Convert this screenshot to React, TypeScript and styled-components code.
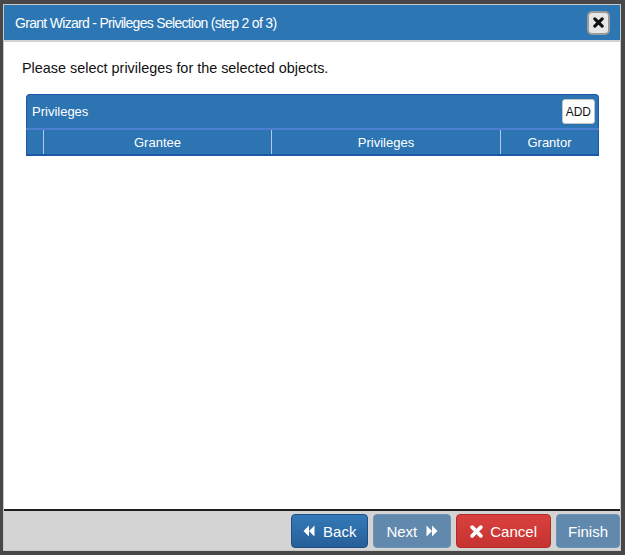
import React from 'react';
import styled, { createGlobalStyle } from 'styled-components';

const GlobalStyle = createGlobalStyle`
    html, body {
        margin: 0;
        padding: 0;
        background: #474747;
        font-family: "Liberation Sans", Arial, sans-serif;
    }
`;

type Tone = 'primary' | 'disabled' | 'danger';

const columns = [
    { label: '', width: 17 },
    { label: 'Grantee', width: 228 },
    { label: 'Privileges', width: 229 },
    { label: 'Grantor', width: 99 },
];

const BackIcon = () => (
    <svg width="12" height="12" viewBox="0 0 12 12">
        <path d="M0.5 6l5.5-5.5v11z M6 6l5.5-5.5v11z" fill="#fff" />
    </svg>
);

const ForwardIcon = () => (
    <svg width="12" height="12" viewBox="0 0 12 12">
        <path d="M0.5 0.5l5.5 5.5-5.5 5.5z M6 0.5l5.5 5.5-5.5 5.5z" fill="#fff" />
    </svg>
);

const CrossIcon = ({ size, color }: { size: number; color: string }) => (
    <svg width={size} height={size} viewBox="0 0 12 12">
        <path
            d="M2 2l8 8 M10 2l-8 8"
            stroke={color}
            strokeWidth="3.4"
            strokeLinecap="round"
        />
    </svg>
);

export default function App() {
    return (
        <>
            <GlobalStyle />
            <Dialog>
                <Header>
                    <Title>Grant Wizard - Privileges Selection (step 2 of 3)</Title>
                    <CloseButton>
                        <CrossIcon size={11} color="#111" />
                    </CloseButton>
                </Header>
                <Body>
                    <Intro>Please select privileges for the selected objects.</Intro>
                    <Panel>
                        <PanelHeader>
                            <PanelTitle>Privileges</PanelTitle>
                            <AddButton>ADD</AddButton>
                        </PanelHeader>
                        <HeadRow>
                            {columns.map((col, index) => (
                                <HeadCell key={index} width={col.width}>
                                    {col.label}
                                </HeadCell>
                            ))}
                        </HeadRow>
                    </Panel>
                </Body>
                <Footer>
                    <WizardButton tone="primary" gap={8} pad={11}>
                        <BackIcon />
                        Back
                    </WizardButton>
                    <WizardButton tone="disabled" gap={9} pad={12}>
                        Next
                        <ForwardIcon />
                    </WizardButton>
                    <WizardButton tone="danger" gap={7} pad={13}>
                        <CrossIcon size={13} color="#fff" />
                        Cancel
                    </WizardButton>
                    <WizardButton tone="disabled" gap={0} pad={11}>
                        Finish
                    </WizardButton>
                </Footer>
            </Dialog>
        </>
    );
}

const Dialog = styled.div`
    box-sizing: border-box;
    margin: 4px 4px 0 3px;
    width: 618px;
    height: 547px;
    display: flex;
    flex-direction: column;
    background: #fff;
    border: 1px solid #c9c9c9;
`;

const Header = styled.div`
    height: 35px;
    flex-shrink: 0;
    display: flex;
    align-items: center;
    justify-content: space-between;
    padding: 0 10px 0 11px;
    background: #2c76b3;
    border-bottom: 2px solid #d2d2d2;
`;

const Title = styled.div`
    color: #fff;
    font-size: 14px;
    letter-spacing: -0.7px;
`;

const CloseButton = styled.div`
    box-sizing: border-box;
    width: 23px;
    height: 24px;
    display: flex;
    align-items: center;
    justify-content: center;
    background: #e6e6e6;
    border: 2px solid #9a9a9a;
    border-radius: 5px;
`;

const Body = styled.div`
    flex: 1;
    padding: 18px 21px 0 22px;
`;

const Intro = styled.div`
    font-size: 14.4px;
    color: #111;
    margin-left: -4px;
    margin-bottom: 18px;
`;

const Panel = styled.div`
    width: 573px;
    border-bottom: 2px solid #1d58a6;
`;

const PanelHeader = styled.div`
    height: 33px;
    display: flex;
    align-items: center;
    justify-content: space-between;
    padding: 0 3px 0 5px;
    background: #2c74b2;
    border: 1px solid #1d58a6;
    border-bottom: none;
    border-radius: 4px 4px 0 0;
`;

const PanelTitle = styled.div`
    color: #fff;
    font-size: 13px;
`;

const AddButton = styled.div`
    height: 23px;
    padding: 0 3px;
    display: flex;
    align-items: center;
    background: #fff;
    border: 1px solid #c4c4c4;
    border-radius: 3px;
    font-size: 12px;
    color: #111;
`;

const HeadRow = styled.div`
    display: flex;
    height: 24px;
    background: #2c74b2;
    border-top: 2px solid #4d7fd0;
`;

const HeadCell = styled.div<{ width: number }>`
    box-sizing: border-box;
    width: ${(p) => p.width}px;
    display: flex;
    align-items: center;
    justify-content: center;
    color: #fff;
    font-size: 13px;
    border-left: 1px solid #b3c7ef;
    &:first-child {
        border-left: 1px solid #1d58a6;
    }
    &:last-child {
        border-right: 1px solid #1d58a6;
    }
`;

const Footer = styled.div`
    box-sizing: border-box;
    height: 41px;
    flex-shrink: 0;
    display: flex;
    justify-content: flex-end;
    align-items: flex-start;
    gap: 5px;
    padding: 3px 0 0;
    background: #d4d4d4;
    border-top: 2px solid #1e1e1e;
`;

const toneStyles: Record<Tone, string> = {
    primary: `
        background: linear-gradient(#3479b8, #265f99);
        border-color: #1f4f85;
    `,
    disabled: `
        background: #6189ad;
        border-color: #6d93b5;
    `,
    danger: `
        background: linear-gradient(#d9413e, #c53331);
        border-color: #b22a28;
    `,
};

const WizardButton = styled.div<{ tone: Tone; gap: number; pad: number }>`
    box-sizing: border-box;
    height: 34px;
    display: flex;
    align-items: center;
    gap: ${(p) => p.gap}px;
    padding: 0 ${(p) => p.pad}px;
    color: #fff;
    font-size: 15px;
    border: 1px solid;
    border-radius: 4px;
    ${(p) => toneStyles[p.tone]}
`;
